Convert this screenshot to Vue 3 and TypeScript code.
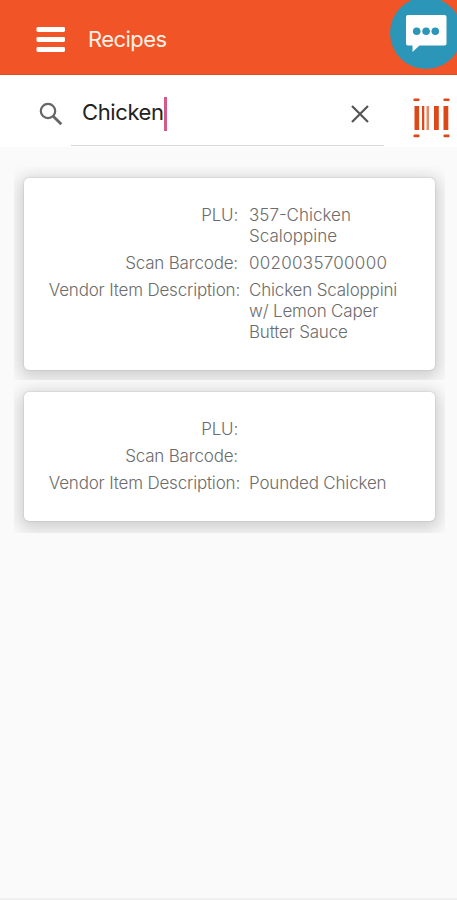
<script setup lang="ts">
import { ref } from 'vue'

interface Recipe {
  plu: string[]
  barcode: string[]
  description: string[]
}

const query = ref<string>('Chicken')

const recipes: Recipe[] = [
  {
    plu: ['357-Chicken', 'Scaloppine'],
    barcode: ['0020035700000'],
    description: ['Chicken Scaloppini', 'w/ Lemon Caper', 'Butter Sauce'],
  },
  { plu: [], barcode: [], description: ['Pounded Chicken'] },
]
</script>

<template>
  <main class="screen">
    <header class="topbar">
      <svg class="menu" viewBox="0 0 30 28" aria-label="Menu">
        <rect x="0.5" y="1" width="28.5" height="5" rx="1.4" />
        <rect x="0.5" y="11" width="28.5" height="5" rx="1.4" />
        <rect x="0.5" y="21" width="28.5" height="5" rx="1.4" />
      </svg>
      <h1 class="title">Recipes</h1>
      <button class="chat" aria-label="Chat">
        <svg viewBox="0 0 72 72">
          <circle cx="36" cy="36" r="36" fill="#2b96b8" />
          <path
            d="M18 18h36.500a2 2 0 0 1 2 2v26.500a2 2 0 0 1-2 2H29.500L22.500 55v-6.500H18a2 2 0 0 1-2-2V20a2 2 0 0 1 2-2z"
            fill="#fff"
          />
          <g fill="#2b96b8">
            <circle cx="26.700" cy="34.300" r="3.800" />
            <circle cx="36.100" cy="34.300" r="3.800" />
            <circle cx="45.300" cy="34.300" r="3.800" />
          </g>
        </svg>
      </button>
    </header>

    <section class="search">
      <svg class="glass" viewBox="0 0 24 24" fill="none" stroke="#666" stroke-width="2.200">
        <circle cx="9" cy="9" r="7.200" />
        <path d="M14.200 14.200L22.300 22.300" stroke-width="2.800" />
      </svg>
      <div class="field">
        <span class="query">{{ query }}</span><i class="caret"></i>
        <svg class="clear" viewBox="0 0 18 18" fill="none" stroke="#555" stroke-width="2.200">
          <path d="M1 1L17 17M17 1L1 17" />
        </svg>
      </div>
      <svg class="scan" viewBox="0 0 37 40" fill="#dc4817">
        <rect x="0.500" y="0.500" width="6" height="2.600" rx="0.800" />
        <rect x="30.500" y="0.500" width="6" height="2.600" rx="0.800" />
        <rect x="0.500" y="36.600" width="6" height="2.600" rx="0.800" />
        <rect x="30.500" y="36.600" width="6" height="2.600" rx="0.800" />
        <rect x="1.500" y="8" width="4.600" height="24" />
        <rect x="9" y="8" width="2.300" height="24" />
        <rect x="13.500" y="8" width="2.500" height="24" opacity="0.650" />
        <rect x="21" y="8" width="4.800" height="24" />
        <rect x="30.500" y="8" width="4.800" height="24" />
      </svg>
    </section>

    <section class="list">
      <div v-for="(recipe, i) in recipes" :key="i" class="slot">
        <article class="card">
          <dl class="rows">
            <div class="row">
              <dt class="inset">PLU:</dt>
              <dd class="plu"><span v-for="line in recipe.plu" :key="line">{{ line }}</span></dd>
            </div>
            <div class="row">
              <dt class="inset">Scan Barcode:</dt>
              <dd class="digits"><span v-for="line in recipe.barcode" :key="line">{{ line }}</span></dd>
            </div>
            <div class="row">
              <dt>Vendor Item Description:</dt>
              <dd><span v-for="line in recipe.description" :key="line">{{ line }}</span></dd>
            </div>
          </dl>
        </article>
      </div>
    </section>
  </main>
</template>

<style>
body {
  margin: 0;
  background: #fafafa;
}
</style>

<style scoped>
.screen {
  box-sizing: border-box;
  width: 457px;
  height: 900px;
  overflow: hidden;
  background: #fafafa;
  border-bottom: 2px solid #f0f0f0;
  font-family: Inter, "Liberation Sans", sans-serif;
}
.topbar {
  position: relative;
  display: flex;
  align-items: center;
  box-sizing: border-box;
  height: 75px;
  padding-left: 36px;
  border-bottom: 1px solid #e5491d;
  background: #f15427;
}
.menu {
  width: 30px;
  height: 28px;
  margin-top: 5px;
  fill: #fff;
}
.title {
  margin: 3px 0 0 22px;
  color: #fff0e6;
  font-size: 22px;
  font-weight: 400;
  line-height: 28px;
  letter-spacing: -0.55px;
}
.chat {
  position: absolute;
  top: -3px;
  left: 390px;
  width: 72px;
  height: 72px;
  padding: 0;
  border: 0;
  background: none;
}
.chat svg {
  display: block;
  width: 72px;
  height: 72px;
}
.search {
  display: flex;
  box-sizing: border-box;
  height: 72px;
  padding-left: 39px;
  background: #fff;
}
.glass {
  flex: none;
  width: 24px;
  height: 24px;
  margin-top: 27px;
}
.field {
  display: flex;
  flex: none;
  align-items: center;
  box-sizing: border-box;
  width: 313px;
  height: 71px;
  margin-left: 8px;
  padding: 0 15px 0 11px;
  border-bottom: 1px solid #d8d8d8;
}
.query {
  margin-top: 4px;
  color: #222;
  font-size: 22px;
  font-weight: 400;
  line-height: 28px;
  letter-spacing: -0.4px;
}
.caret {
  width: 3px;
  height: 34px;
  margin-top: 8px;
  background: #d65a86;
}
.clear {
  width: 18px;
  height: 18px;
  margin: 7px 0 0 auto;
}
.scan {
  flex: none;
  width: 37px;
  height: 40px;
  margin: 23px 0 0 29px;
}
.list {
  padding: 19px 12px 0 14px;
}
.slot {
  overflow: hidden;
  padding: 12px 10px 10px;
}
.slot:last-child {
  padding-bottom: 12px;
}
.card {
  box-sizing: border-box;
  padding: 27px 8px 27px 16px;
  border-radius: 5px;
  background: #fff;
  box-shadow: 0 0 2px rgba(0, 0, 0, 0.2), 0 4px 16px 5px rgba(0, 0, 0, 0.16);
}
.rows {
  display: grid;
  gap: 6px;
  margin: 0;
}
.row {
  display: grid;
  grid-template-columns: 200px 1fr;
  column-gap: 9px;
  color: #6c6c6c;
  font-size: 17px;
  font-weight: 300;
  line-height: 21px;
  letter-spacing: -0.18px;
}
dt {
  text-align: right;
  white-space: nowrap;
}
.inset {
  padding-right: 2px;
}
dd {
  margin: 0;
}
.plu {
  letter-spacing: 0;
}
.digits {
  letter-spacing: 0.28px;
}
dd span {
  display: block;
  white-space: nowrap;
}
</style>
